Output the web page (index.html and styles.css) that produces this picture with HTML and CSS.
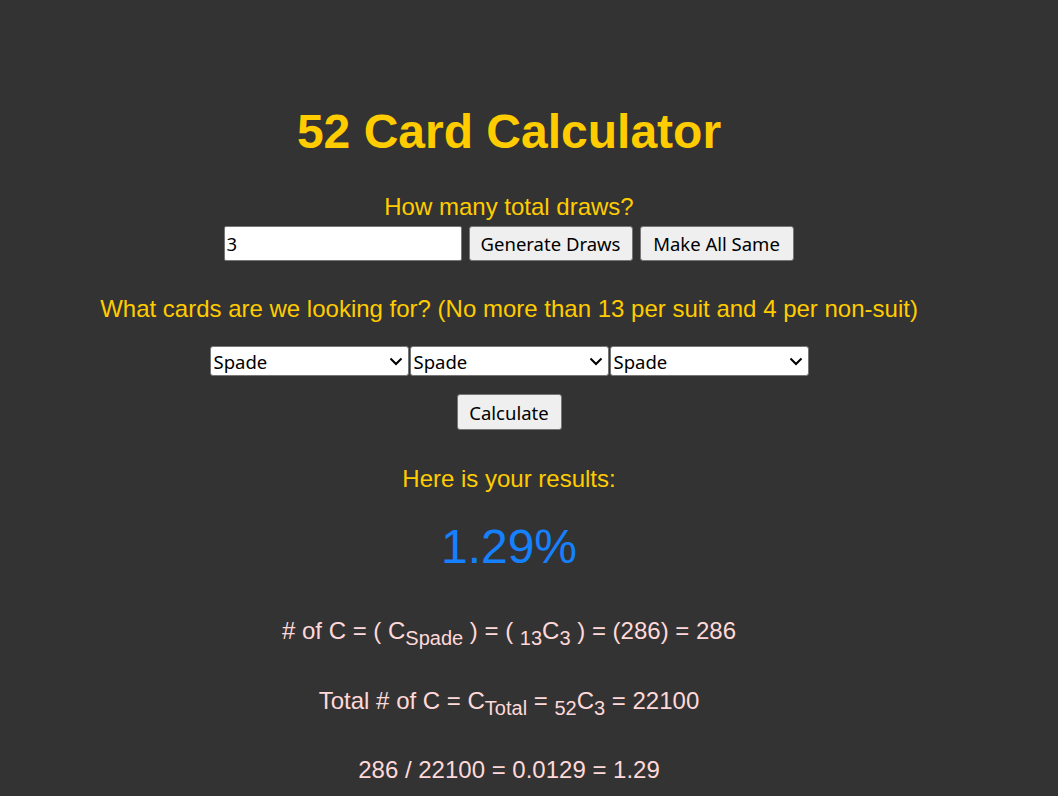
FILE: index.html
```html
<!DOCTYPE html>
<html>
<head>
<meta charset="utf-8">
<title>52 Card Calculator</title>
<link rel="stylesheet" href="styles.css">
</head>
<body>
<main class="page">
  <h1 class="title">52 Card Calculator</h1>
  <p class="question q-draws">How many total draws?</p>
  <div class="draw-row">
    <input class="draw-input" type="text" value="3"><button class="btn btn-generate">Generate Draws</button><button class="btn btn-same">Make All Same</button>
  </div>
  <p class="question q-cards">What cards are we looking for? (No more than 13 per suit and 4 per non-suit)</p>
  <div class="select-row">
    <select class="suit"><option>Spade</option><option>Heart</option><option>Diamond</option><option>Club</option></select><select class="suit"><option>Spade</option><option>Heart</option><option>Diamond</option><option>Club</option></select><select class="suit"><option>Spade</option><option>Heart</option><option>Diamond</option><option>Club</option></select>
  </div>
  <button class="btn btn-calc">Calculate</button>
  <p class="question q-results">Here is your results:</p>
  <p class="percent">1.29%</p>
  <p class="formula f1"># of C = ( C<sub>Spade</sub> ) = ( <sub>13</sub>C<sub>3</sub> ) = (286) = 286</p>
  <p class="formula f2">Total # of C = C<sub>Total</sub> = <sub>52</sub>C<sub>3</sub> = 22100</p>
  <p class="formula f3">286 / 22100 = 0.0129 = 1.29</p>
</main>
</body>
</html>
```
FILE: styles.css
```css
html, body {
  margin: 0;
  padding: 0;
  background: #333333;
}

body {
  font-family: "Liberation Sans", Arial, sans-serif;
  height: 796px;
  overflow: hidden;
}

.page {
  display: flex;
  flex-direction: column;
  align-items: center;
  padding-right: 40px;
}

.title {
  margin: 105px 0 0;
  font-size: 48px;
  line-height: 54px;
  font-weight: bold;
  color: #ffcc00;
}

.question {
  margin: 0;
  font-size: 24px;
  line-height: 27px;
  color: #ffcc00;
}

.q-draws { margin-top: 34px; }

.draw-row {
  display: flex;
  gap: 7px;
  margin-top: 6px;
  height: 34px;
}

.draw-input {
  box-sizing: border-box;
  width: 238px;
  height: 35px;
  margin: 0 0 0 -1px;
  padding: 1px 2px;
  border: 1px solid #767676;
  border-radius: 2px;
  background: #ffffff;
  font-family: "Noto Sans", "Open Sans", sans-serif;
  font-size: 18.5px;
  color: #000;
}

.btn {
  box-sizing: border-box;
  margin: 0;
  padding: 0 6px;
  border: 1px solid #767676;
  border-radius: 3px;
  background: #efefef;
  font-family: "Noto Sans", "Open Sans", sans-serif;
  font-size: 18.5px;
  color: #000;
}

.btn-generate { width: 164px; height: 35px; }
.btn-same { width: 154px; height: 35px; }

.q-cards { margin-top: 35px; }

.select-row {
  display: flex;
  gap: 1px;
  margin-top: 24px;
}

.suit {
  box-sizing: border-box;
  width: 199px;
  height: 30px;
  margin: 0;
  padding: 0 24px 0 3px;
  border: 1px solid #767676;
  border-radius: 3px;
  background-color: #ffffff;
  background-image: url("data:image/svg+xml;utf8,<svg xmlns='http://www.w3.org/2000/svg' width='14' height='9' viewBox='0 0 14 9'><path d='M1.5 1.5 L7 7 L12.5 1.5' fill='none' stroke='black' stroke-width='2'/></svg>");
  background-repeat: no-repeat;
  background-position: right 5px center;
  -webkit-appearance: none;
  appearance: none;
  font-family: "Noto Sans", "Open Sans", sans-serif;
  font-size: 18.5px;
  color: #000;
}

.btn-calc {
  width: 105px;
  height: 36px;
  margin-top: 18px;
}

.q-results { margin-top: 35px; }

.percent {
  margin: 28px 0 0;
  font-size: 48px;
  line-height: 54px;
  color: #1681ff;
}

.formula {
  margin: 0;
  font-size: 24px;
  line-height: 27px;
  color: #ffd9d9;
}

.formula sub {
  font-size: 20px;
  line-height: 0;
  vertical-align: -6px;
}

.f1 { margin-top: 43px; }
.f2 { margin-top: 43px; }
.f3 { margin-top: 42px; }
```
